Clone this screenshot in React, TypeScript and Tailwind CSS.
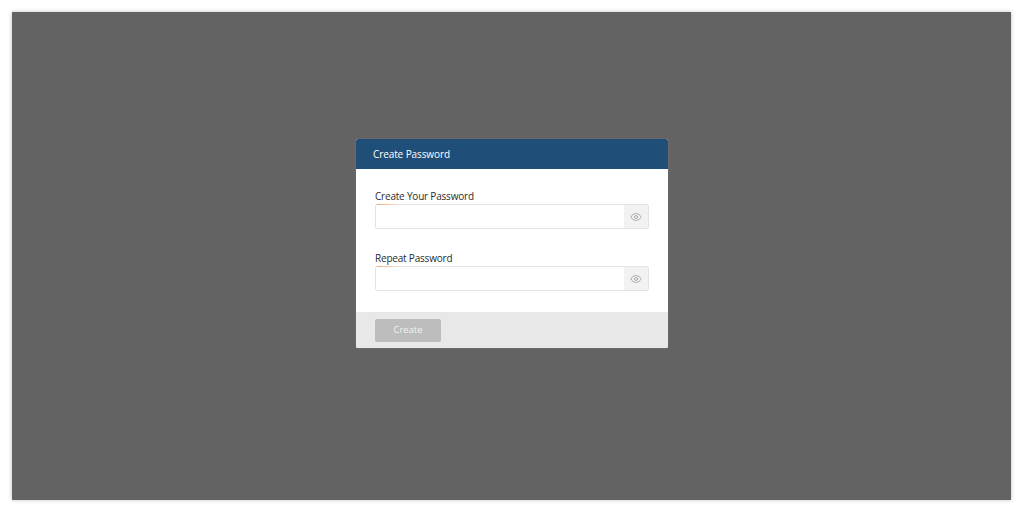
import { Eye } from "lucide-react";

function PasswordField({ label }: { label: string }) {
  return (
    <div>
      <label className="block h-[18px] text-[10px] leading-[20px] tracking-[-0.2px] text-[#2b2b2b]">
        {label}
      </label>
      <div className="relative flex h-[25px] rounded-[2px] border border-[#e3e3e3] bg-white">
        <span className="absolute left-[1px] top-[-1px] h-px w-[19px] bg-gradient-to-r from-[#f5a673] to-[#fbd9c2]" />
        <input type="password" className="min-w-0 flex-1 outline-none" />
        <span className="flex w-[24px] items-center justify-center bg-[#f2f2f2]">
          <Eye className="h-[12px] w-[12px] text-[#999999]" strokeWidth={1.5} />
        </span>
      </div>
    </div>
  );
}

export default function App() {
  return (
    <div className="h-[513px] bg-white pb-[13px] pl-[12px] pr-[13px] pt-[12px] font-['Open_Sans',sans-serif]">
      <div className="flex h-[488px] items-start justify-center bg-[#636363] pt-[127px] shadow-[0_0_4px_rgba(0,0,0,0.25)]">
        <div className="ml-[1px] w-[312px] overflow-hidden rounded-[2px] bg-white shadow-[0_0_1px_rgba(255,255,255,0.5)]">
          <div className="flex h-[30px] items-center bg-[#1f4e79] pl-[17px] text-[10px] tracking-[-0.1px] text-white">
            Create Password
          </div>
          <div className="flex h-[143px] flex-col gap-[19px] px-[19px] pt-[17px]">
            <PasswordField label="Create Your Password" />
            <PasswordField label="Repeat Password" />
          </div>
          <div className="flex h-[36px] items-center bg-[#e8e8e8] px-[19px]">
            <button
              type="button"
              className="h-[23px] w-[66px] rounded-[2px] bg-[#bdbdbd] text-[9.4px] text-[#f2f2f2]"
            >
              Create
            </button>
          </div>
        </div>
      </div>
    </div>
  );
}
